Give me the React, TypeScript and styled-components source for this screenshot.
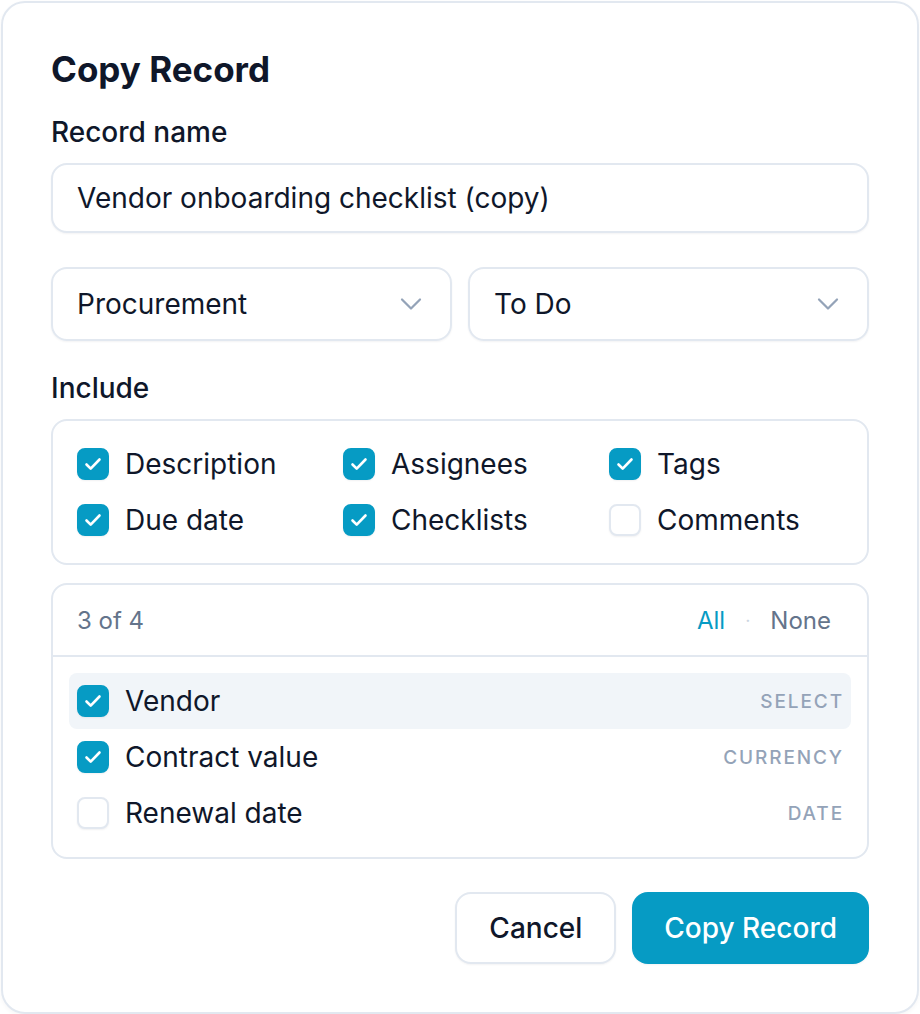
import React, { useState } from 'react';
import styled, { createGlobalStyle } from 'styled-components';
import { ChevronDown } from 'lucide-react';

const GlobalStyle = createGlobalStyle`
  html, body {
    margin: 0;
    padding: 0;
    background: #ffffff;
  }
  body {
    font-family: Inter, "Noto Sans", "Liberation Sans", sans-serif;
    color: #0f172a;
    -webkit-font-smoothing: antialiased;
  }
  * {
    box-sizing: border-box;
  }
`;

const Page = styled.div`
  padding: 1px;
`;

const Dialog = styled.div`
  width: 918px;
  display: flex;
  flex-direction: column;
  padding: 48px;
  background: #ffffff;
  border: 2px solid #e2e8f0;
  border-radius: 24px;
  box-shadow: 0 2px 4px rgba(15, 23, 42, 0.04);
`;

const Title = styled.h2`
  margin: 0;
  font-size: 35px;
  line-height: 36px;
  font-weight: 700;
`;

const Label = styled.div<{ $top: number }>`
  margin-top: ${(p) => p.$top}px;
  font-size: 28px;
  line-height: 32px;
  font-weight: 500;
`;

const TextInput = styled.input`
  margin-top: 15px;
  height: 70px;
  width: 100%;
  padding: 0 24px;
  font-family: inherit;
  font-size: 28px;
  color: #0f172a;
  background: #ffffff;
  border: 2px solid #e2e8f0;
  border-radius: 16px;
  box-shadow: 0 1px 2px rgba(15, 23, 42, 0.05);
  outline: none;
`;

const SelectRow = styled.div`
  margin-top: 34px;
  display: grid;
  grid-template-columns: 1fr 1fr;
  gap: 16px;
`;

const SelectBox = styled.div`
  height: 74px;
  display: flex;
  align-items: center;
  justify-content: space-between;
  padding: 0 21px 0 24px;
  font-size: 28px;
  border: 2px solid #e2e8f0;
  border-radius: 16px;
  box-shadow: 0 1px 2px rgba(15, 23, 42, 0.05);
  cursor: pointer;

  svg {
    color: #94a3b8;
  }
`;

const Panel = styled.div<{ $top: number }>`
  margin-top: ${(p) => p.$top}px;
  border: 2px solid #e2e8f0;
  border-radius: 16px;
  background: #ffffff;
`;

const OptionGrid = styled.div`
  display: grid;
  grid-template-columns: repeat(3, 1fr);
  column-gap: 32px;
  row-gap: 20px;
  padding: 25px 24px;
`;

const Option = styled.label`
  display: flex;
  align-items: center;
  gap: 16px;
  height: 36px;
  font-size: 28px;
  cursor: pointer;
`;

const Box = styled.span<{ $on: boolean }>`
  flex: none;
  width: 32px;
  height: 32px;
  border-radius: 8px;
  display: flex;
  align-items: center;
  justify-content: center;
  background: ${(p) => (p.$on ? '#069bc4' : '#ffffff')};
  border: 2px solid ${(p) => (p.$on ? '#069bc4' : '#e2e8f0')};
  box-shadow: 0 1px 2px rgba(15, 23, 42, 0.06);
`;

const PanelHeader = styled.div`
  height: 72px;
  display: flex;
  align-items: center;
  justify-content: space-between;
  padding: 0 36px 0 24px;
  border-bottom: 2px solid #e2e8f0;
  font-size: 24px;
  color: #64748b;
`;

const HeaderLinks = styled.div`
  display: flex;
  align-items: center;
  gap: 20px;
`;

const LinkButton = styled.button<{ $accent?: boolean }>`
  padding: 0;
  border: none;
  background: none;
  font-family: inherit;
  font-size: 24px;
  color: ${(p) => (p.$accent ? '#069bc4' : '#64748b')};
  cursor: pointer;
`;

const Dot = styled.span`
  color: #cbd5e1;
  font-size: 18px;
`;

const FieldList = styled.div`
  display: flex;
  flex-direction: column;
  padding: 16px;
`;

const FieldRow = styled.label<{ $active?: boolean }>`
  height: 56px;
  display: flex;
  align-items: center;
  gap: 16px;
  padding: 0 7px 0 8px;
  border-radius: 8px;
  font-size: 28px;
  background: ${(p) => (p.$active ? '#f1f5f9' : 'transparent')};
  cursor: pointer;
`;

const FieldName = styled.span`
  flex: 1;
`;

const FieldType = styled.span`
  font-size: 19px;
  font-weight: 500;
  letter-spacing: 1.9px;
  text-transform: uppercase;
  color: #94a3b8;
`;

const Actions = styled.div`
  margin-top: 33px;
  display: flex;
  justify-content: flex-end;
  gap: 16px;
`;

const Button = styled.button<{ $primary?: boolean }>`
  height: 72px;
  padding: 0 32px;
  font-family: inherit;
  font-size: 28px;
  font-weight: 500;
  border-radius: 16px;
  cursor: pointer;
  color: ${(p) => (p.$primary ? '#ffffff' : '#0f172a')};
  background: ${(p) => (p.$primary ? '#069bc4' : '#ffffff')};
  border: ${(p) => (p.$primary ? 'none' : '2px solid #e2e8f0')};
  box-shadow: 0 1px 2px rgba(15, 23, 42, 0.05);
`;

const CheckMark = () => (
  <svg width="20" height="20" viewBox="0 0 20 20" fill="none">
    <path d="M3.5 10.5l4.2 4.2L16.5 5.5" stroke="#fff" strokeWidth="2.6" strokeLinecap="round" strokeLinejoin="round" />
  </svg>
);

const Checkbox = ({ on }: { on: boolean }) => <Box $on={on}>{on && <CheckMark />}</Box>;

const includeOptions = [
  { name: 'Description', on: true },
  { name: 'Assignees', on: true },
  { name: 'Tags', on: true },
  { name: 'Due date', on: true },
  { name: 'Checklists', on: true },
  { name: 'Comments', on: false },
];

const fields = [
  { name: 'Vendor', type: 'Select', on: true },
  { name: 'Contract value', type: 'Currency', on: true },
  { name: 'Renewal date', type: 'Date', on: false },
];

export default function App() {
  const [name, setName] = useState('Vendor onboarding checklist (copy)');

  return (
    <Page>
      <GlobalStyle />
      <Dialog>
        <Title>Copy Record</Title>

        <Label $top={29}>Record name</Label>
        <TextInput value={name} onChange={(e) => setName(e.target.value)} />

        <SelectRow>
          <SelectBox>
            Procurement
            <ChevronDown size={36} strokeWidth={1.5} />
          </SelectBox>
          <SelectBox>
            To Do
            <ChevronDown size={36} strokeWidth={1.5} />
          </SelectBox>
        </SelectRow>

        <Label $top={31}>Include</Label>
        <Panel $top={15}>
          <OptionGrid>
            {includeOptions.map((o) => (
              <Option key={o.name}>
                <Checkbox on={o.on} />
                {o.name}
              </Option>
            ))}
          </OptionGrid>
        </Panel>

        <Panel $top={18}>
          <PanelHeader>
            <span>3 of 4</span>
            <HeaderLinks>
              <LinkButton $accent>All</LinkButton>
              <Dot>·</Dot>
              <LinkButton>None</LinkButton>
            </HeaderLinks>
          </PanelHeader>
          <FieldList>
            {fields.map((f, i) => (
              <FieldRow key={f.name} $active={i === 0}>
                <Checkbox on={f.on} />
                <FieldName>{f.name}</FieldName>
                <FieldType>{f.type}</FieldType>
              </FieldRow>
            ))}
          </FieldList>
        </Panel>

        <Actions>
          <Button>Cancel</Button>
          <Button $primary>Copy Record</Button>
        </Actions>
      </Dialog>
    </Page>
  );
}
